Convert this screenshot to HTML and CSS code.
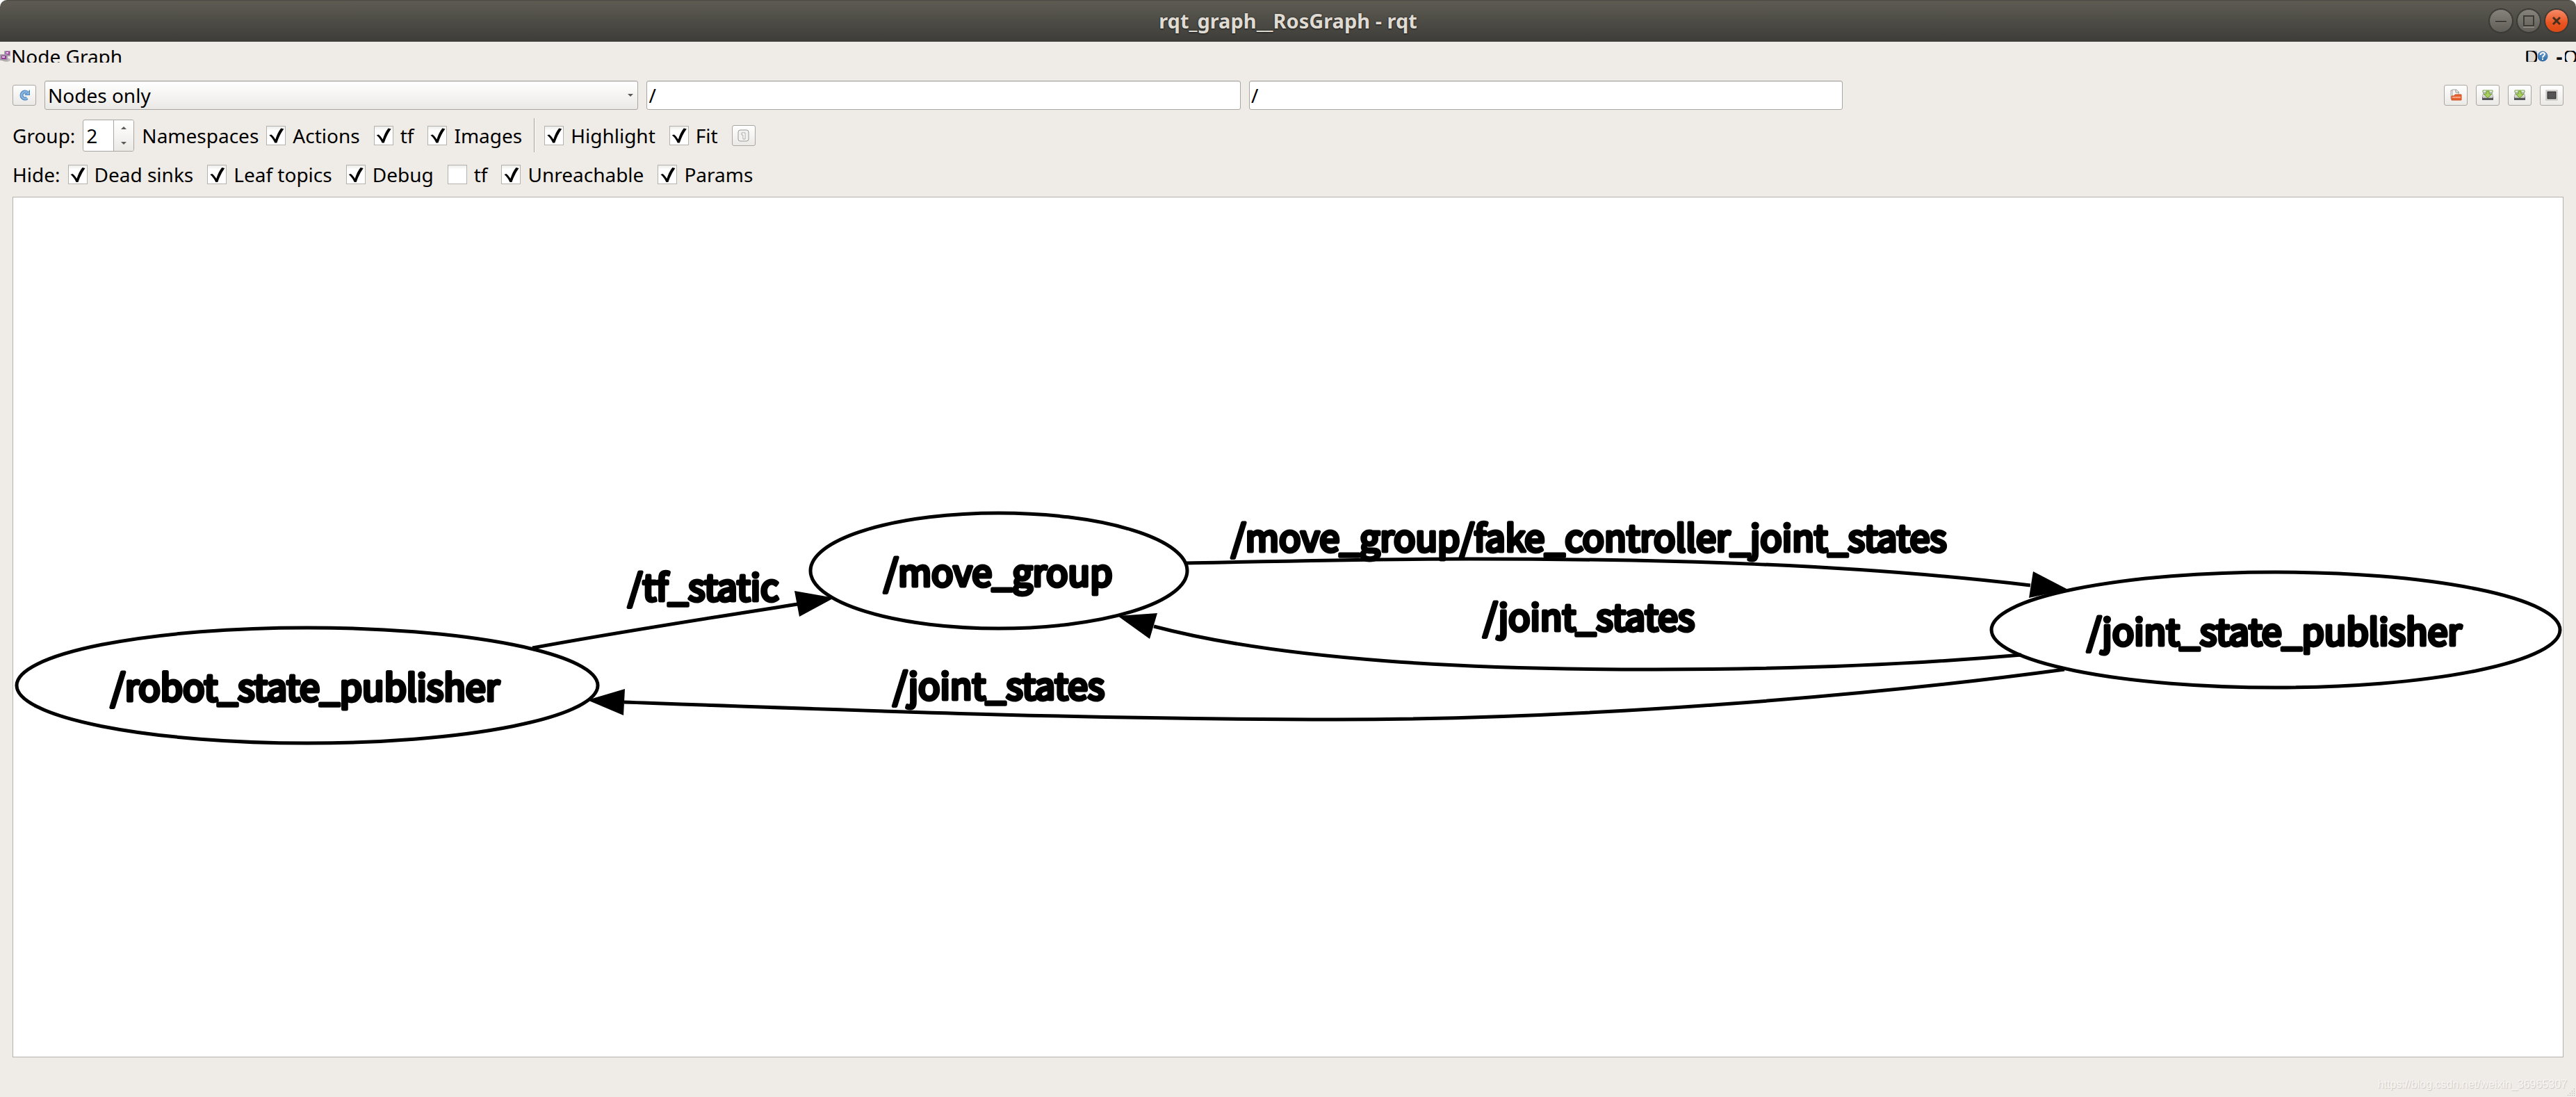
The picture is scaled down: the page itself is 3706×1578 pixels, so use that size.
FILE: index.html
```html
<!DOCTYPE html>
<html lang="en">
<head>
<meta charset="utf-8">
<title>rqt_graph__RosGraph - rqt</title>
<link rel="stylesheet" href="styles.css">
</head>
<body>
<header class="titlebar">
  <h1 class="title">rqt_graph__RosGraph - rqt</h1>
  <div class="window-buttons">
    <button class="win" aria-label="Minimize"><svg viewBox="0 0 34 34"><path d="M9 19h16" stroke="#7f7d76" stroke-width="2"/><path d="M9 18h16" stroke="#3c3b37" stroke-width="2"/></svg></button>
    <button class="win" aria-label="Maximize"><svg viewBox="0 0 34 34"><path d="M9 26h16" stroke="#8a8880" stroke-width="2"/><rect x="10" y="10" width="14" height="14" fill="none" stroke="#3c3b37" stroke-width="2"/></svg></button>
    <button class="win close" aria-label="Close"><svg viewBox="0 0 34 34"><path d="M12 12l10 10M22 12L12 22" stroke="#46301c" stroke-width="3"/></svg></button>
  </div>
</header>
<section class="dock-title">
  <svg class="dock-icon" viewBox="0 0 16 18"><rect x="6" y="1" width="9" height="8" rx="1" fill="#a59aa8"/><rect x="8" y="2" width="6" height="5" fill="#9c4fa0"/><rect x="9" y="3" width="3" height="2" fill="#e6cfe8"/><ellipse cx="9" cy="14" rx="6" ry="3" fill="#bdbab8"/><rect x="0" y="6" width="11" height="9" rx="1" fill="#a59aa8"/><rect x="2" y="8" width="7" height="5" fill="#8e3c94"/><rect x="3" y="9" width="4" height="2" fill="#e6cfe8"/></svg>
  <h2 class="dock-name">Node Graph</h2>
  <div class="dock-buttons">
    <button class="mini framed">D</button>
    <button class="mini" aria-label="Help"><svg viewBox="0 0 16 16"><defs><linearGradient id="help" x1="0" y1="0" x2="0" y2="1"><stop offset="0" stop-color="#6ba0d4"/><stop offset="1" stop-color="#2d6aa8"/></linearGradient></defs><circle cx="8" cy="8" r="7" fill="url(#help)" stroke="#3a6ea5"/><path d="M5 6c0-4 6-4 6-1 0 2-3 2-3 5M8 11v2" fill="none" stroke="#fff" stroke-width="2"/></svg></button>
    <button class="mini dash">-</button>
    <button class="mini">O</button>
  </div>
</section>
<main class="panel">
  <div class="row fields">
    <button class="tool" aria-label="Refresh"><svg viewBox="0 0 18 18"><path d="M13 13a5 5 0 1 1 0-8" fill="none" stroke="#4683bd" stroke-width="5"/><path d="M17 1v8H9z" fill="#4683bd"/><path d="M13 13a5 5 0 1 1 0-8" fill="none" stroke="#86b4de" stroke-width="3"/><path d="M16 3v5h-5z" fill="#86b4de"/></svg></button>
    <div class="field select-wrap">
      <select class="select" aria-label="Graph type"><option>Nodes only</option></select>
      <svg class="select-arrow" viewBox="0 0 8 6"><path d="M0 1h8L4 5z" fill="#5b5a56"/></svg>
    </div>
    <input class="field text" type="text" value="/" aria-label="Node filter">
    <input class="field text" type="text" value="/" aria-label="Topic filter">
    <div class="spacer"></div>
    <button class="tool" aria-label="Load dot file"><svg viewBox="0 0 18 18"><path d="M2 2h5v12H2z" fill="#fff" stroke="#a3a3a0"/><path d="M4 1h6l3 3v9H4z" fill="#f6f6f5" stroke="#a3a3a0"/><path d="M9 1v4h5" fill="none" stroke="#8b8b88"/><path d="M3 16V10h4l1-2h9v8z" fill="#e8612e" stroke="#c9501f"/><path d="M4 11h12v2H4z" fill="#f5a27e"/></svg></button>
    <button class="tool" aria-label="Save as dot"><svg viewBox="0 0 18 18"><path d="M2 2h14v3H2z" fill="#fff" stroke="#6d9c3c"/><path d="M1 12L3 5h12l2 7z" fill="#d9dad8" stroke="#aaa"/><path d="M1 12h16v4H1z" fill="#55565a"/><path d="M2 12h14v1H2z" fill="#bbb"/><path d="M7 3h4v4h4l-6 6-6-6h4z" fill="#a9cf5f" stroke="#6a9a2c"/></svg></button>
    <button class="tool" aria-label="Save as SVG"><svg viewBox="0 0 18 18"><path d="M2 2h14v3H2z" fill="#fff" stroke="#6d9c3c"/><path d="M1 12L3 5h12l2 7z" fill="#d9dad8" stroke="#aaa"/><path d="M1 12h16v4H1z" fill="#55565a"/><path d="M2 12h14v1H2z" fill="#bbb"/><path d="M7 3h4v4h4l-6 6-6-6h4z" fill="#a9cf5f" stroke="#6a9a2c"/></svg></button>
    <button class="tool" aria-label="Save as image"><svg viewBox="0 0 18 18"><rect x="1" y="2" width="16" height="14" fill="#f4f4f2" stroke="#b5b3af"/><rect x="3" y="4" width="12" height="10" fill="#555" stroke="#222"/></svg></button>
  </div>
  <div class="row group">
    <label for="depth">Group:</label>
    <div class="spin">
      <input class="spin-value" id="depth" type="number" value="2">
      <div class="spin-buttons">
        <button class="step" aria-label="More"><svg viewBox="0 0 8 6"><path d="M0 5h8L4 1z" fill="#5b5a56"/></svg></button>
        <button class="step" aria-label="Less"><svg viewBox="0 0 8 6"><path d="M0 1h8L4 5z" fill="#5b5a56"/></svg></button>
      </div>
    </div>
    <span>Namespaces</span>
    <div class="checks">
      <label class="check"><input type="checkbox" checked>Actions</label>
      <label class="check"><input type="checkbox" checked>tf</label>
      <label class="check"><input type="checkbox" checked>Images</label>
    </div>
    <div class="separator"></div>
    <div class="checks">
      <label class="check"><input type="checkbox" checked>Highlight</label>
      <label class="check"><input type="checkbox" checked>Fit</label>
      <button class="tool" aria-label="Fit in view"><svg viewBox="0 0 18 18"><rect x="1" y="1" width="15" height="16" rx="3" fill="#f1f1f0" stroke="#9a9a97"/><path d="M6 5h5v9H8V8H6z" fill="#fff" stroke="#aaa9a6"/></svg></button>
    </div>
  </div>
  <div class="row hide">
    <span>Hide:</span>
    <div class="checks">
      <label class="check"><input type="checkbox" checked>Dead sinks</label>
      <label class="check"><input type="checkbox" checked>Leaf topics</label>
      <label class="check"><input type="checkbox" checked>Debug</label>
      <label class="check"><input type="checkbox">tf</label>
      <label class="check"><input type="checkbox" checked>Unreachable</label>
      <label class="check"><input type="checkbox" checked>Params</label>
    </div>
  </div>
  <div class="view">
    <svg class="graph" viewBox="19 284 3668 1236">
      <g class="nodes">
        <ellipse cx="442" cy="986" rx="418" ry="83"/>
        <ellipse cx="1437" cy="821" rx="271" ry="83"/>
        <ellipse cx="3274" cy="906" rx="409" ry="83"/>
      </g>
      <g class="edges">
        <path d="M766 932C890 909 1020 889 1148 869"/>
        <path d="M1707 810C1850 807 1990 804 2114 804C2390 804 2660 811 2921 842"/>
        <path d="M2908 942C2740 957 2550 963 2381 963C2120 963 1850 951 1660 901"/>
        <path d="M2970 963C2690 1001 2280 1035 1922 1035C1580 1035 1260 1023 898 1010"/>
      </g>
      <g class="heads">
        <path d="M1200 860L1143 850L1150 887z"/>
        <path d="M2975 848L2925 822L2919 860z"/>
        <path d="M1608 886L1665 882L1654 919z"/>
        <path d="M845 1007L899 991L897 1029z"/>
      </g>
      <g class="labels">
        <text x="439" y="1008">/robot_state_publisher</text>
        <text x="1436" y="843">/move_group</text>
        <text x="3272" y="928">/joint_state_publisher</text>
        <text x="1012" y="864">/tf_static</text>
        <text x="2286" y="793">/move_group/fake_controller_joint_states</text>
        <text x="2286" y="907">/joint_states</text>
        <text x="1437" y="1006">/joint_states</text>
      </g>
    </svg>
  </div>
</main>
<footer class="statusbar">
  <span class="watermark">https://blog.csdn.net/weixin_36965307</span>
  <svg class="grip" viewBox="0 0 12 12"><path d="M10 0h1v1h-1zM7 3h1v1h-1zM10 3h1v1h-1zM4 6h1v1h-1zM7 6h1v1h-1zM10 6h1v1h-1zM1 9h1v1h-1zM4 9h1v1h-1zM7 9h1v1h-1zM10 9h1v1h-1z" fill="#a9a59f"/></svg>
</footer>
</body>
</html>
```
FILE: styles.css
```css
* { box-sizing: border-box; }

html { background: #fff; }

body {
  margin: 0;
  min-height: 100vh;
  display: flex;
  flex-direction: column;
  background: #efebe7;
  border-radius: 10px 10px 0 0;
  overflow: hidden;
  color: #000;
  font: 28px/36px "Noto Sans", sans-serif;
}

button, input, select { font: inherit; color: inherit; margin: 0; padding: 0; }
svg { display: block; }

.titlebar {
  height: 60px;
  display: grid;
  grid-template-columns: 1fr auto 1fr;
  align-items: center;
  background: linear-gradient(#4b4a44 1px, #5a584f 1px, #5c5a51 4px, #3d3c38);
}
.title {
  grid-column: 2;
  margin: 0;
  color: #dfdbd2;
  font-size: 29px;
  font-weight: 700;
  line-height: 36px;
  text-shadow: 0 0 2px #22211f, 0 1px 2px #22211f;
}
.window-buttons { display: flex; justify-content: flex-end; gap: 6px; padding-right: 11px; }
.win {
  width: 34px;
  height: 34px;
  border: 1px solid #3a3935;
  border-radius: 50%;
  background: linear-gradient(#85837b, #5f5d56);
  box-shadow: 0 0 0 1px #3a3935;
}
.win svg { width: 34px; height: 34px; margin: -1px; }
.close { background: linear-gradient(#f78a68, #e95420 60%, #dc4a16); }

.dock-title { display: flex; align-items: center; height: 18px; margin-top: 12px; overflow: hidden; }
.dock-icon { width: 16px; height: 18px; flex: none; }
.dock-name { margin: 0; font-size: 28px; font-weight: 400; line-height: 24px; height: 24px; }
.dock-buttons { margin-left: auto; display: flex; }
.mini {
  width: 16px;
  height: 16px;
  border: 0;
  background: none;
  overflow: hidden;
  display: flex;
  align-items: center;
  justify-content: center;
}
.mini svg { width: 16px; height: 16px; }
.framed { background: #dcd8d3; box-shadow: inset 0 0 0 1px #aaa6a1; border-radius: 2px; }
.dash { margin-left: 8px; font-weight: 700; }

.panel { flex: 1; display: flex; flex-direction: column; gap: 12px; padding: 26px 18px 0; }
.row { display: flex; align-items: center; gap: 11px; }
.fields { height: 42px; gap: 12px; }
.group { height: 49px; }
.hide { height: 40px; }

.field { flex: 61 1 10px; min-width: 0; height: 42px; }
.spacer { flex: 60 1 10px; }
.text, .select {
  border: 1px solid #aaa6a1;
  border-radius: 3px;
  background: #fff;
  box-shadow: inset 0 1px #e6e4e1;
  padding: 0 2px;
}
.select-wrap { display: grid; align-items: center; }
.select {
  appearance: none;
  grid-area: 1 / 1;
  width: 100%;
  height: 42px;
  padding: 0 24px 0 4px;
  background: linear-gradient(#fff, #ebe9e6);
}
.select-arrow { grid-area: 1 / 1; justify-self: end; width: 8px; height: 6px; margin-right: 7px; }

.tool {
  flex: none;
  width: 34px;
  height: 30px;
  border: 1px solid #aaa6a1;
  border-radius: 3px;
  background: linear-gradient(#fff, #ebe9e6);
  display: flex;
  align-items: center;
  justify-content: center;
}
.tool svg { width: 18px; height: 18px; }

.spin {
  display: flex;
  width: 74px;
  height: 46px;
  border: 1px solid #aaa6a1;
  border-radius: 3px;
  background: #fff;
  overflow: hidden;
}
.spin-value { flex: 1; min-width: 0; border: 0; padding-left: 4px; background: none; appearance: textfield; }
.spin-value::-webkit-inner-spin-button { appearance: none; margin: 0; }
.spin-buttons {
  display: flex;
  flex-direction: column;
  width: 29px;
  border-left: 1px solid #aaa6a1;
  background: linear-gradient(#fff, #ebe9e6);
}
.step { flex: 1; border: 0; background: none; display: flex; align-items: center; justify-content: center; }
.step svg { width: 8px; height: 6px; }

.separator { width: 2px; height: 49px; margin: 0 2px 0 6px; background: #a5a19c; border-right: 1px solid #fbfaf9; }
.checks { display: flex; align-items: center; gap: 20px; }
.check { display: flex; align-items: center; gap: 10px; }
.check input {
  appearance: none;
  width: 28px;
  height: 28px;
  border: 1px solid #b5b1ac;
  background: linear-gradient(#ececea, #fff 6px);
}
.check input:checked::before {
  content: "";
  display: block;
  width: 26px;
  height: 26px;
  background: #000;
  clip-path: path("M3 13L6 12Q9 14 12 19Q15 9 20 3L24 4Q18 12 14 24L11 24Q8 17 3 13z");
}

.view { flex: 1; display: flex; min-height: 400px; border: 1px solid #b5b1ac; background: #fff; }
.graph { flex: 1; min-width: 0; width: 100%; height: auto; }
.nodes, .edges { fill: none; stroke: #000; stroke-width: 5; }
.heads { fill: #000; }
.labels {
  font: 52px "Noto Sans CJK SC", sans-serif;
  text-anchor: middle;
  fill: #000;
  stroke: #000;
  stroke-width: 5;
  stroke-linejoin: round;
}

.statusbar { height: 57px; display: flex; justify-content: flex-end; align-items: flex-end; }
.watermark {
  color: #f8f7f5;
  font: 16px/18px "Liberation Sans", sans-serif;
  text-shadow: 1px 1px 1px #c9c6c2;
  margin-bottom: 9px;
}
.grip { width: 12px; height: 12px; margin-right: 1px; }
```
